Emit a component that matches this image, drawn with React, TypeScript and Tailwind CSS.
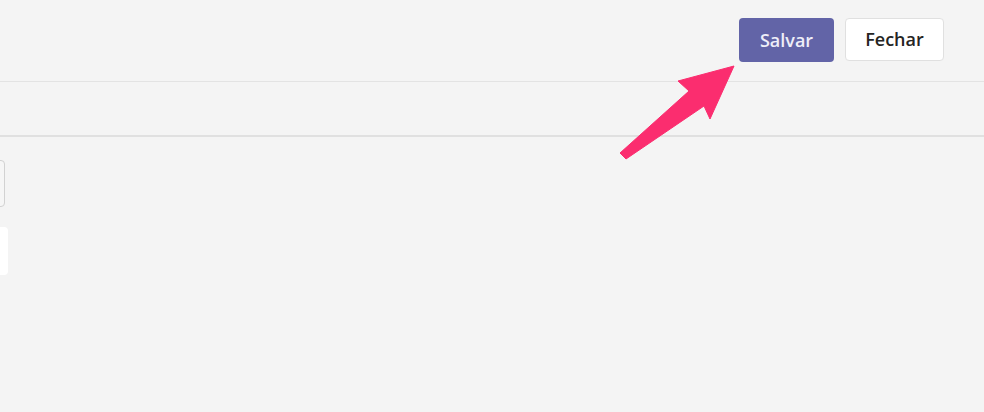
import React from "react";

export default function App() {
  return (
    <div
      className="relative w-[984px] h-[412px] overflow-hidden bg-[#f4f4f4]"
      style={{ fontFamily: '"Open Sans", "Noto Sans", sans-serif' }}
    >
      <div className="h-[82px] border-b border-[#e3e3e3] flex items-start justify-end pr-[40px] pt-[18px] gap-[11px]">
        <button className="w-[95px] h-[44px] rounded-[4px] bg-[#6264a7] text-[#eeeef8] text-[18px] font-semibold">
          Salvar
        </button>
        <button className="w-[99px] h-[43px] rounded-[4px] bg-white border border-[#e0e0e0] text-[#252423] text-[18px] font-semibold">
          Fechar
        </button>
      </div>
      <div className="h-[55px] border-b-2 border-[#e0e0e0]" />
      <div className="pt-[23px] flex flex-col gap-[20px]">
        <div className="-ml-[100px] w-[105px] h-[47px] rounded-[4px] border border-[#d2d2d2] bg-[#f6f6f6]" />
        <div className="-ml-[100px] w-[108px] h-[48px] rounded-[4px] bg-white" />
      </div>
      <svg
        className="absolute left-0 top-0"
        width="984"
        height="412"
        viewBox="0 0 984 412"
      >
        <polygon
          points="734,66 710,119 704,106 626,159 620,153 689,91 678,81"
          fill="#fb2d6f"
          stroke="#fb2d6f"
          strokeWidth="1"
          strokeLinejoin="round"
        />
      </svg>
    </div>
  );
}
